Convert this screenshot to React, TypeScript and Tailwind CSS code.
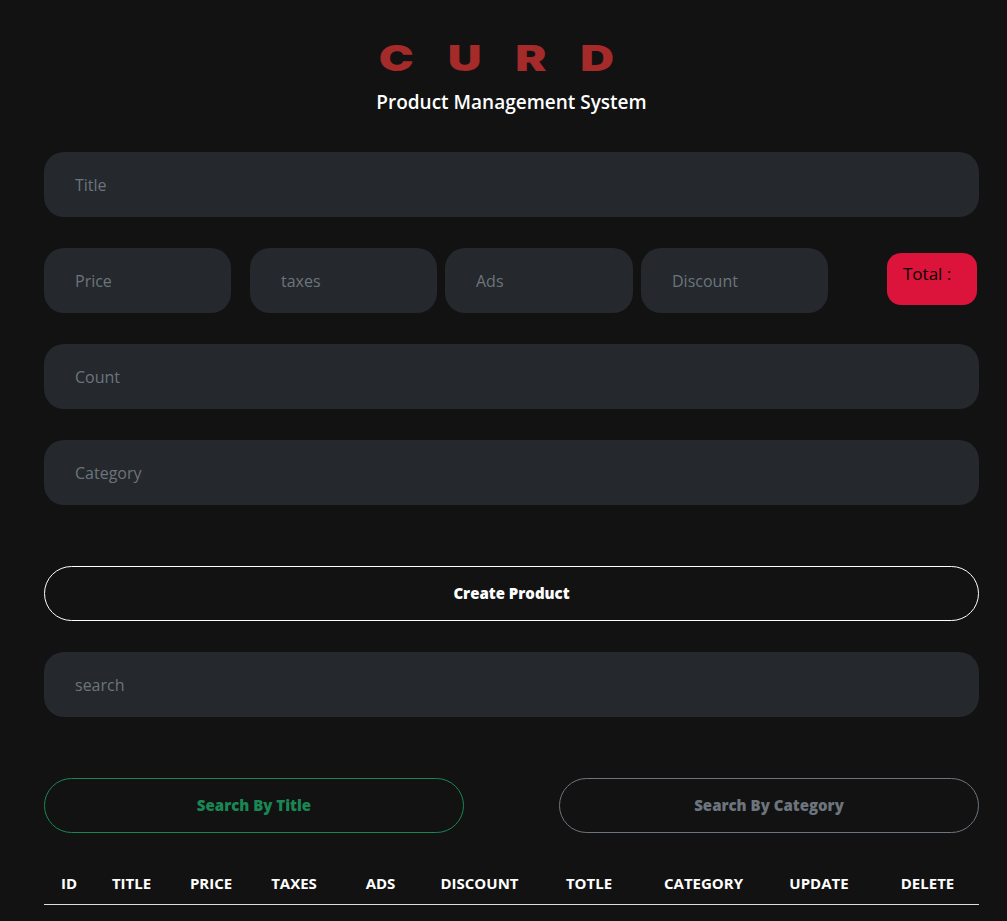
export default function App() {
  const cols = [
    ["ID", "w-[50px]"],
    ["TITLE", "w-[75px]"],
    ["PRICE", "w-[84px]"],
    ["TAXES", "w-[82px]"],
    ["ADS", "w-[91px]"],
    ["DISCOUNT", "w-[107px]"],
    ["TOTLE", "w-[112px]"],
    ["CATEGORY", "w-[117px]"],
    ["UPDATE", "w-[114px]"],
    ["DELETE", "w-[103px]"],
  ];

  const input =
    "w-full h-[65px] rounded-[20px] bg-[#25282c] pl-[31px] pr-4 text-[16px] text-gray-200 placeholder:text-[#6c757d] outline-none";

  return (
    <div className="min-h-screen bg-[#121212] text-white font-['Open_Sans',sans-serif]">
      <div className="w-[935px] ml-[44px] pt-[36px]">
        <header className="flex flex-col items-center">
          <h1 className="text-[#a52a2a] font-['Inter',sans-serif] font-black text-[36px] leading-[44px] tracking-[26px] pl-[26px] scale-x-[1.3] -ml-[30px]">
            CURD
          </h1>
          <p className="mt-[10px] text-[19px] font-semibold leading-6 text-white">
            Product Management System
          </p>
        </header>

        <div className="mt-[38px] flex flex-col">
          <input className={input} placeholder="Title" />

          <div className="mt-[31px] flex items-start">
            <input className={input + " !w-[187px]"} placeholder="Price" />
            <input className={input + " !w-[187px] ml-[19px]"} placeholder="taxes" />
            <input className={input + " !w-[188px] ml-[8px]"} placeholder="Ads" />
            <input className={input + " !w-[187px] ml-[8px]"} placeholder="Discount" />
            <div className="ml-[59px] mt-[5px] w-[90px] h-[52px] rounded-[14px] bg-[#dc143c] text-black text-[17px] pt-[8px] pl-[16px]">
              Total :
            </div>
          </div>

          <input className={input + " mt-[31px]"} placeholder="Count" />
          <input className={input + " mt-[31px]"} placeholder="Category" />

          <button className="mt-[61px] h-[55px] w-full rounded-full border border-white text-white text-[15px] font-extrabold">
            Create Product
          </button>

          <input className={input + " mt-[31px]"} placeholder="search" />

          <div className="mt-[61px] flex justify-between">
            <button className="w-[420px] h-[55px] rounded-full border border-[#198754] text-[#198754] text-[15px] font-extrabold">
              Search By Title
            </button>
            <button className="w-[420px] h-[55px] rounded-full border border-[#6c757d] text-[#6c757d] text-[15px] font-extrabold">
              Search By Category
            </button>
          </div>

          <table className="mt-[30px] w-full table-fixed border-collapse">
            <thead>
              <tr className="border-b border-[#dddddd]">
                {cols.map(([name, w]) => (
                  <th key={name} className={w + " h-[41px] text-[15px] font-bold text-white text-center uppercase"}>
                    {name}
                  </th>
                ))}
              </tr>
            </thead>
            <tbody />
          </table>
        </div>
      </div>
    </div>
  );
}
